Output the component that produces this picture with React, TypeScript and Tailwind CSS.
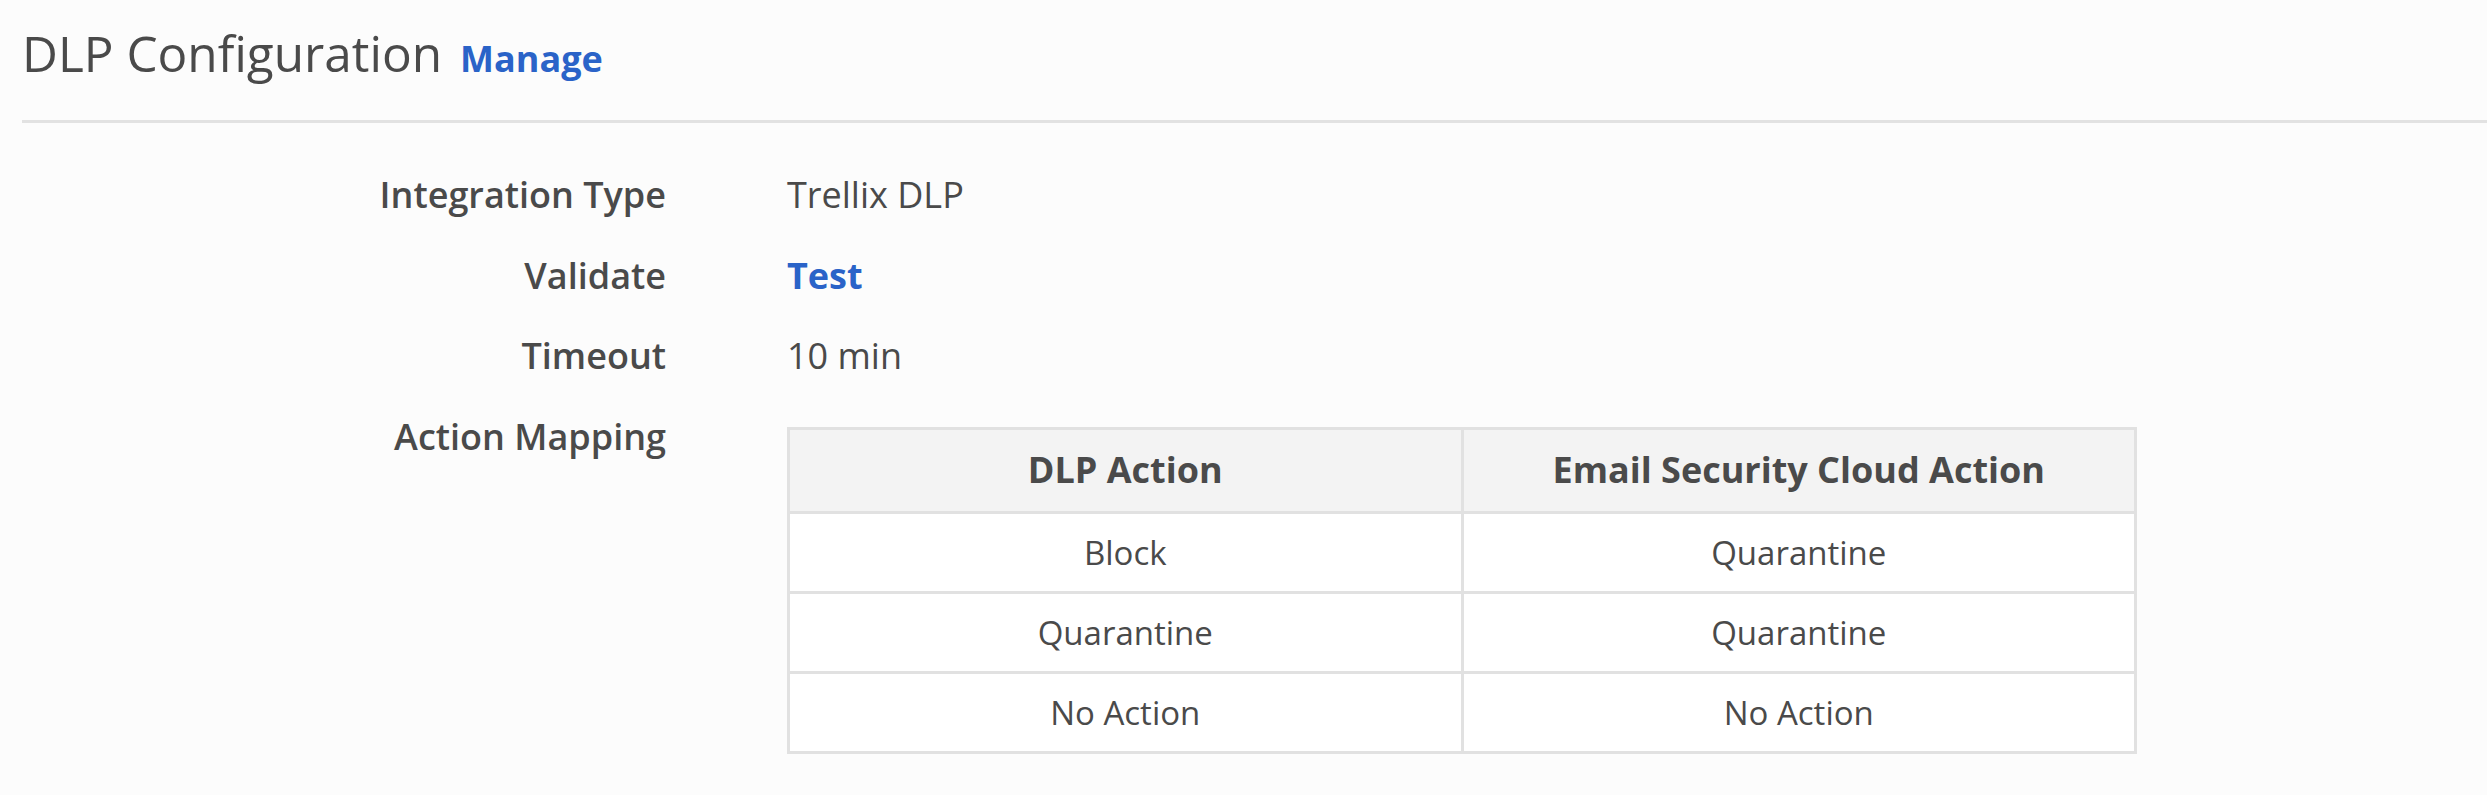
import React from 'react';

interface Mapping {
  dlp: string;
  esc: string;
}

const mappings: Mapping[] = [
  { dlp: 'Block', esc: 'Quarantine' },
  { dlp: 'Quarantine', esc: 'Quarantine' },
  { dlp: 'No Action', esc: 'No Action' },
];

const App: React.FC = () => {
  return (
    <div className="min-h-screen bg-[#fcfcfc] text-[#4a4a4a] font-['Open_Sans',sans-serif]">
      {/* header */}
      <div className="ml-[22px] pt-[29px] pb-[43px] border-b-[3px] border-[#e2e2e2] flex items-baseline gap-[18px]">
        <h1 className="text-[49.5px] leading-[48px] font-normal">DLP Configuration</h1>
        <a href="#" className="text-[36px] leading-none font-bold text-[#2a63c8]">
          Manage
        </a>
      </div>

      <div className="ml-[22px] pt-[32px] grid grid-cols-[644px_1fr] gap-x-[121px] text-[36px] leading-[80.5px]">
        <div className="text-right font-semibold">Integration Type</div>
        <div>Trellix DLP</div>

        <div className="text-right font-semibold">Validate</div>
        <div>
          <a href="#" className="font-bold text-[#2a63c8]">Test</a>
        </div>

        <div className="text-right font-semibold">Timeout</div>
        <div>10 min</div>

        <div className="text-right font-semibold">Action Mapping</div>
        <div className="pt-[30px]">
          <table className="w-[1350px] table-fixed border-collapse border-[3px] border-[#e1e1e1]">
            <thead>
              <tr>
                <th className="h-[84px] bg-[#f3f3f3] border-[3px] border-[#e1e1e1] text-[36px] leading-none font-bold">
                  DLP Action
                </th>
                <th className="h-[84px] bg-[#f3f3f3] border-[3px] border-[#e1e1e1] text-[36px] leading-none font-bold">
                  Email Security Cloud Action
                </th>
              </tr>
            </thead>
            <tbody>
              {mappings.map((m, i) => (
                <tr key={i}>
                  <td className="h-[80px] bg-white border-[3px] border-[#e1e1e1] text-center text-[33px] leading-none">
                    {m.dlp}
                  </td>
                  <td className="h-[80px] bg-white border-[3px] border-[#e1e1e1] text-center text-[33px] leading-none">
                    {m.esc}
                  </td>
                </tr>
              ))}
            </tbody>
          </table>
        </div>
      </div>
    </div>
  );
};

export default App;
